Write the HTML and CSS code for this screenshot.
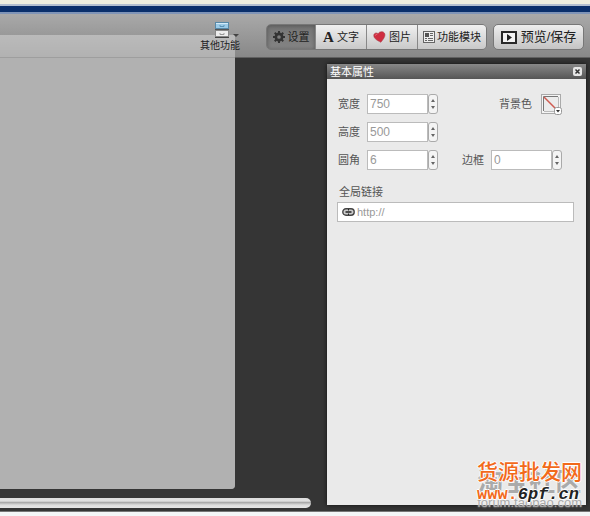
FILE: index.html
```html
<!DOCTYPE html>
<html lang="zh-CN">
<head>
    <meta charset="UTF-8">
    <meta name="viewport" content="width=device-width, initial-scale=1.0">
    <title>基本属性</title>
    <link rel="stylesheet" href="styles.css">
</head>
<body>

<div class="top-line"></div>

<header class="toolbar">
    <button class="more" type="button">
        <svg class="more-icon" width="14" height="16" viewBox="0 0 14 16">
            <rect x="0.5" y="0.5" width="13" height="6" fill="#9ccbe8" stroke="#5889a8"/>
            <path d="M1 1.5h12" stroke="#d3eaf8"/>
            <path d="M5 3v1.5h4V3" fill="none" stroke="#5b94b8"/>
            <path d="M0 7.5h14" stroke="#555"/>
            <rect x="0.5" y="8.5" width="13" height="6" fill="#ededed" stroke="#888"/>
            <path d="M5 11v1.5h4V11" fill="none" stroke="#999"/>
            <path d="M0 15.5h14" stroke="#444"/>
        </svg>
        <span>其他功能</span>
        <i class="caret"></i>
    </button>

    <nav class="tabs">
        <button class="tab active" type="button">
            <svg width="12" height="12" viewBox="0 0 13 13">
                <circle cx="6.5" cy="6.5" r="3.4" fill="none" stroke="#333" stroke-width="2.8"/>
                <path d="M6.5 0v2.5M6.5 10.5V13M0 6.5h2.5M10.5 6.5H13M1.9 1.9l1.8 1.8M9.3 9.3l1.8 1.8M1.9 11.1l1.8-1.8M9.3 3.7l1.8-1.8" stroke="#333" stroke-width="2.2"/>
            </svg>
            <span>设置</span>
        </button>
        <button class="tab" type="button"><b class="letter">A</b><span>文字</span></button>
        <button class="tab" type="button">
            <svg width="13" height="12" viewBox="0 0 14 13">
                <path d="M8.5 12.2C5 10.5 1 8.5 0.8 5 0.7 2.5 3.5 1.2 5.5 3 6.5 0.6 10.5-0.2 12.3 2.2 14.3 5.5 10.8 9 8.5 12.2z" fill="#cf2d40" stroke="#a83a46" stroke-width="0.6"/>
                <path d="M2.5 5c0-1 1-1.6 2-1.2" fill="none" stroke="#ef7483"/>
            </svg>
            <span>图片</span>
        </button>
        <button class="tab module" type="button">
            <svg width="12" height="12" viewBox="0 0 12 12">
                <rect x="0.5" y="0.5" width="11" height="11" fill="#eee" stroke="#666"/>
                <rect x="2" y="2" width="4" height="4" fill="#555"/>
                <path d="M7 2.5h3M7 4.5h3M2 7.5h2M5 7.5h5M2 9.5h2M5 9.5h5" stroke="#666"/>
            </svg>
            <span>功能模块</span>
        </button>
    </nav>

    <button class="preview" type="button">
        <svg width="16" height="13" viewBox="0 0 16 13">
            <rect x="1" y="1" width="14" height="11" fill="#f3f3f3" stroke="#282828" stroke-width="2"/>
            <path d="M6 3v7l5-3.5z" fill="#222"/>
        </svg>
        <span>预览/保存</span>
    </button>
</header>

<main class="workspace">
    <section class="stage">
        <div class="canvas"></div>
        <div class="scrollbar"></div>
    </section>

    <aside class="panel">
        <div class="panel-head">
            <h2>基本属性</h2>
            <button class="close" type="button" aria-label="关闭">
                <svg width="9" height="9" viewBox="0 0 9 9">
                    <rect width="9" height="9" rx="2" fill="#e6e6e6"/>
                    <path d="M2.5 2.5l4 4M6.5 2.5l-4 4" stroke="#333" stroke-width="1.5"/>
                </svg>
            </button>
        </div>

        <form class="panel-body">
            <div class="row">
                <div class="field">
                    <label for="width">宽度</label>
                    <input type="text" id="width" value="750">
                    <button class="spin" type="button" aria-label="调整宽度"><i class="up"></i><i class="down"></i></button>
                </div>
                <div class="field color">
                    <label for="background">背景色</label>
                    <button class="swatch" id="background" type="button">
                        <svg width="21" height="21" viewBox="0 0 21 21">
                            <rect x="0.5" y="0.5" width="19" height="19" fill="#f4f4f4" stroke="#aaa"/>
                            <path d="M2.5 17V2.5H17" fill="none" stroke="#777"/>
                            <rect x="3" y="3" width="14" height="14" fill="#ececec"/>
                            <path d="M17.5 3v14.500H3" fill="none" stroke="#bbb"/>
                            <path d="M3 3l13 13" stroke="#cf5b51" stroke-width="1.5"/>
                            <rect x="13.5" y="13.5" width="7" height="7" rx="2" fill="#fff" stroke="#999"/>
                            <path d="M15 16h4l-2 2.500z" fill="#333"/>
                        </svg>
                    </button>
                </div>
            </div>
            <div class="row">
                <div class="field">
                    <label for="height">高度</label>
                    <input type="text" id="height" value="500">
                    <button class="spin" type="button" aria-label="调整高度"><i class="up"></i><i class="down"></i></button>
                </div>
            </div>
            <div class="row">
                <div class="field">
                    <label for="radius">圆角</label>
                    <input type="text" id="radius" value="6">
                    <button class="spin" type="button" aria-label="调整圆角"><i class="up"></i><i class="down"></i></button>
                </div>
                <div class="field">
                    <label for="border">边框</label>
                    <input type="text" id="border" value="0">
                    <button class="spin" type="button" aria-label="调整边框"><i class="up"></i><i class="down"></i></button>
                </div>
            </div>

            <label class="link-label" for="link">全局链接</label>
            <div class="link-box">
                <svg width="13" height="8" viewBox="0 0 13 8">
                    <rect x="0.8" y="0.8" width="11.4" height="6.4" rx="3.2" fill="#ccc" stroke="#444" stroke-width="1.4"/>
                    <path d="M3.500 4h6" stroke="#222" stroke-width="1.5"/>
                    <path d="M6.5 1v1.5M6.500 5.500V7" stroke="#222"/>
                </svg>
                <input type="text" id="link" value="http://">
            </div>
        </form>

        <!-- site marks over the panel corner -->
        <div class="forum-mark">
            <strong>淘宝社区</strong>
            <span>forum.taobao.com</span>
        </div>
        <div class="site-mark">
            <strong>货源批发网</strong>
            <span>www.<em>6pf.cn</em></span>
        </div>
    </aside>
</main>

</body>
</html>
```
FILE: styles.css
```css
* {
    box-sizing: border-box;
}
body {
    margin: 0;
    min-height: 100vh;
    display: flex;
    flex-direction: column;
    padding-bottom: 4px;
    background-color: #f4f6f7;
    font-family: "Liberation Sans", "Noto Sans CJK SC", sans-serif;
    font-size: 11px;
    line-height: 16px;
    color: #555;
}
button {
    margin: 0;
    padding: 0;
    border: none;
    background: none;
    font: inherit;
    color: #222;
    cursor: pointer;
}
svg {
    display: block;
    flex: none;
}

/* Toolbar */
.top-line {
    height: 14px;
    background: linear-gradient(#eeeedf 4px, #b3bfd0 4px 6px, #0a2f6b 6px 12px, #7f94b7 12px);
}
.toolbar {
    display: flex;
    justify-content: flex-end;
    align-items: flex-start;
    height: 44px;
    padding: 8px 6px 0 0;
    background: linear-gradient(#a9a9a9, #888);
    border-bottom: 1px solid #606060;
}
.more {
    position: relative;
    z-index: 2;
    display: flex;
    flex-direction: column;
    align-items: center;
    width: 40px;
    margin-right: 26px;
    font-size: 10px;
    white-space: nowrap;
}
.more-icon {
    margin-left: 4px;
}
.caret {
    position: absolute;
    top: 12px;
    right: 1px;
    border: 3px solid transparent;
    border-top-color: #444;
    border-bottom: none;
}
.tabs {
    display: flex;
    height: 26px;
    margin: 2px 6px 0 0;
    border: 1px solid #777;
    border-radius: 5px;
    overflow: hidden;
}
.tab {
    display: flex;
    align-items: center;
    justify-content: center;
    gap: 3px;
    width: 51px;
    border-left: 1px solid #888;
    background: linear-gradient(#f0f0f0, #c9c9c9);
    white-space: nowrap;
}
.tab.active {
    width: 48px;
    border-left: none;
    background: linear-gradient(#757575, #848484);
    box-shadow: inset 0 1px 4px #555;
}
.tab.module {
    gap: 2px;
    width: 69px;
}
.letter {
    font-family: "Liberation Serif", serif;
    font-size: 15px;
}
.preview {
    display: flex;
    align-items: center;
    justify-content: center;
    gap: 4px;
    width: 91px;
    height: 26px;
    margin-top: 2px;
    border: 1px solid #777;
    border-radius: 5px;
    background: linear-gradient(#eee, #c4c4c4);
    font-size: 13px;
    white-space: nowrap;
}

/* Workspace */
.workspace {
    flex: 1;
    display: flex;
    padding: 6px 4px 6px 0;
    background-color: #353535;
    border-bottom: 1px solid #777;
}
.stage {
    flex: 1;
    display: flex;
    flex-direction: column;
}
.canvas {
    position: relative;
    flex: 1;
    margin: -29px 92px 0 0;
    background-color: rgba(220, 220, 220, 0.5);
    border-radius: 0 0 4px 0;
}
.canvas::before {
    content: "";
    position: absolute;
    inset: 23px 0 0;
    background-color: #b1b1b1;
    border-radius: 0 0 4px 0;
}
.scrollbar {
    height: 10px;
    margin: 9px 16px -3px 0;
    border-radius: 0 5px 5px 0;
    background: linear-gradient(#ddd, #e0e0e0 30%, #aaa 45%, #ddd 70%, #e6e6e6);
}

/* Properties panel */
.panel {
    position: relative;
    display: flex;
    flex-direction: column;
    width: 259px;
    background-color: #eaeaea;
    box-shadow: 0 0 4px #111;
}
.panel-head {
    display: flex;
    align-items: center;
    justify-content: space-between;
    height: 15px;
    padding: 0 4px 0 3px;
    background: linear-gradient(#888, #555);
}
.panel-head h2 {
    margin: 0;
    font-size: 11px;
    font-weight: normal;
    color: #fff;
}
.panel-body {
    padding: 15px 12px 0 10px;
}
.row {
    display: flex;
    justify-content: space-between;
    margin: 0 12px 8px 0;
}
.field {
    display: flex;
    align-items: center;
    height: 20px;
}
.field label {
    width: 30px;
    padding-left: 1px;
    white-space: nowrap;
}
.field.color label {
    width: 43px;
}
input {
    min-width: 0;
    font-family: inherit;
    color: #999;
}
.field input {
    width: 61px;
    height: 20px;
    padding: 0 2px;
    border: 1px solid #bbb;
    background-color: #fff;
    font-size: 12px;
}
.spin {
    display: flex;
    flex-direction: column;
    align-items: center;
    justify-content: space-between;
    width: 10px;
    height: 20px;
    padding: 4px 0;
    border: 1px solid #aaa;
    border-radius: 3px;
    background-color: #f4f4f4;
}
.up,
.down {
    border: 2px solid transparent;
}
.up {
    border-bottom: 3px solid #666;
    border-top: none;
}
.down {
    border-top: 3px solid #666;
    border-bottom: none;
}
.link-label {
    display: block;
    margin: 14px 0 2px 2px;
}
.link-box {
    display: flex;
    align-items: center;
    gap: 2px;
    height: 20px;
    padding: 0 4px;
    border: 1px solid #bbb;
    background-color: #fff;
}
.link-box input {
    flex: 1;
    padding: 0;
    border: none;
    font-size: 11px;
}

/* Site marks */
.forum-mark,
.site-mark {
    position: absolute;
    right: 4px;
    display: flex;
    flex-direction: column;
    white-space: nowrap;
}
.forum-mark {
    bottom: -5px;
    color: #aaa;
    text-shadow: 0 0 2px #fff;
}
.forum-mark strong {
    font-size: 26px;
    line-height: 28px;
}
.forum-mark span {
    font-size: 13px;
    line-height: 14px;
}
.site-mark {
    bottom: 0;
    color: #f26a1b;
    text-shadow: 1px 0 #fff, -1px 0 #fff, 0 1px #fff, 0 -1px #fff;
}
.site-mark strong {
    font-size: 21px;
    font-weight: 500;
    line-height: 24px;
}
.site-mark span {
    font: bold 17px/21px "Liberation Mono", monospace;
}
.site-mark em {
    font-style: italic;
    color: #222;
}
```
